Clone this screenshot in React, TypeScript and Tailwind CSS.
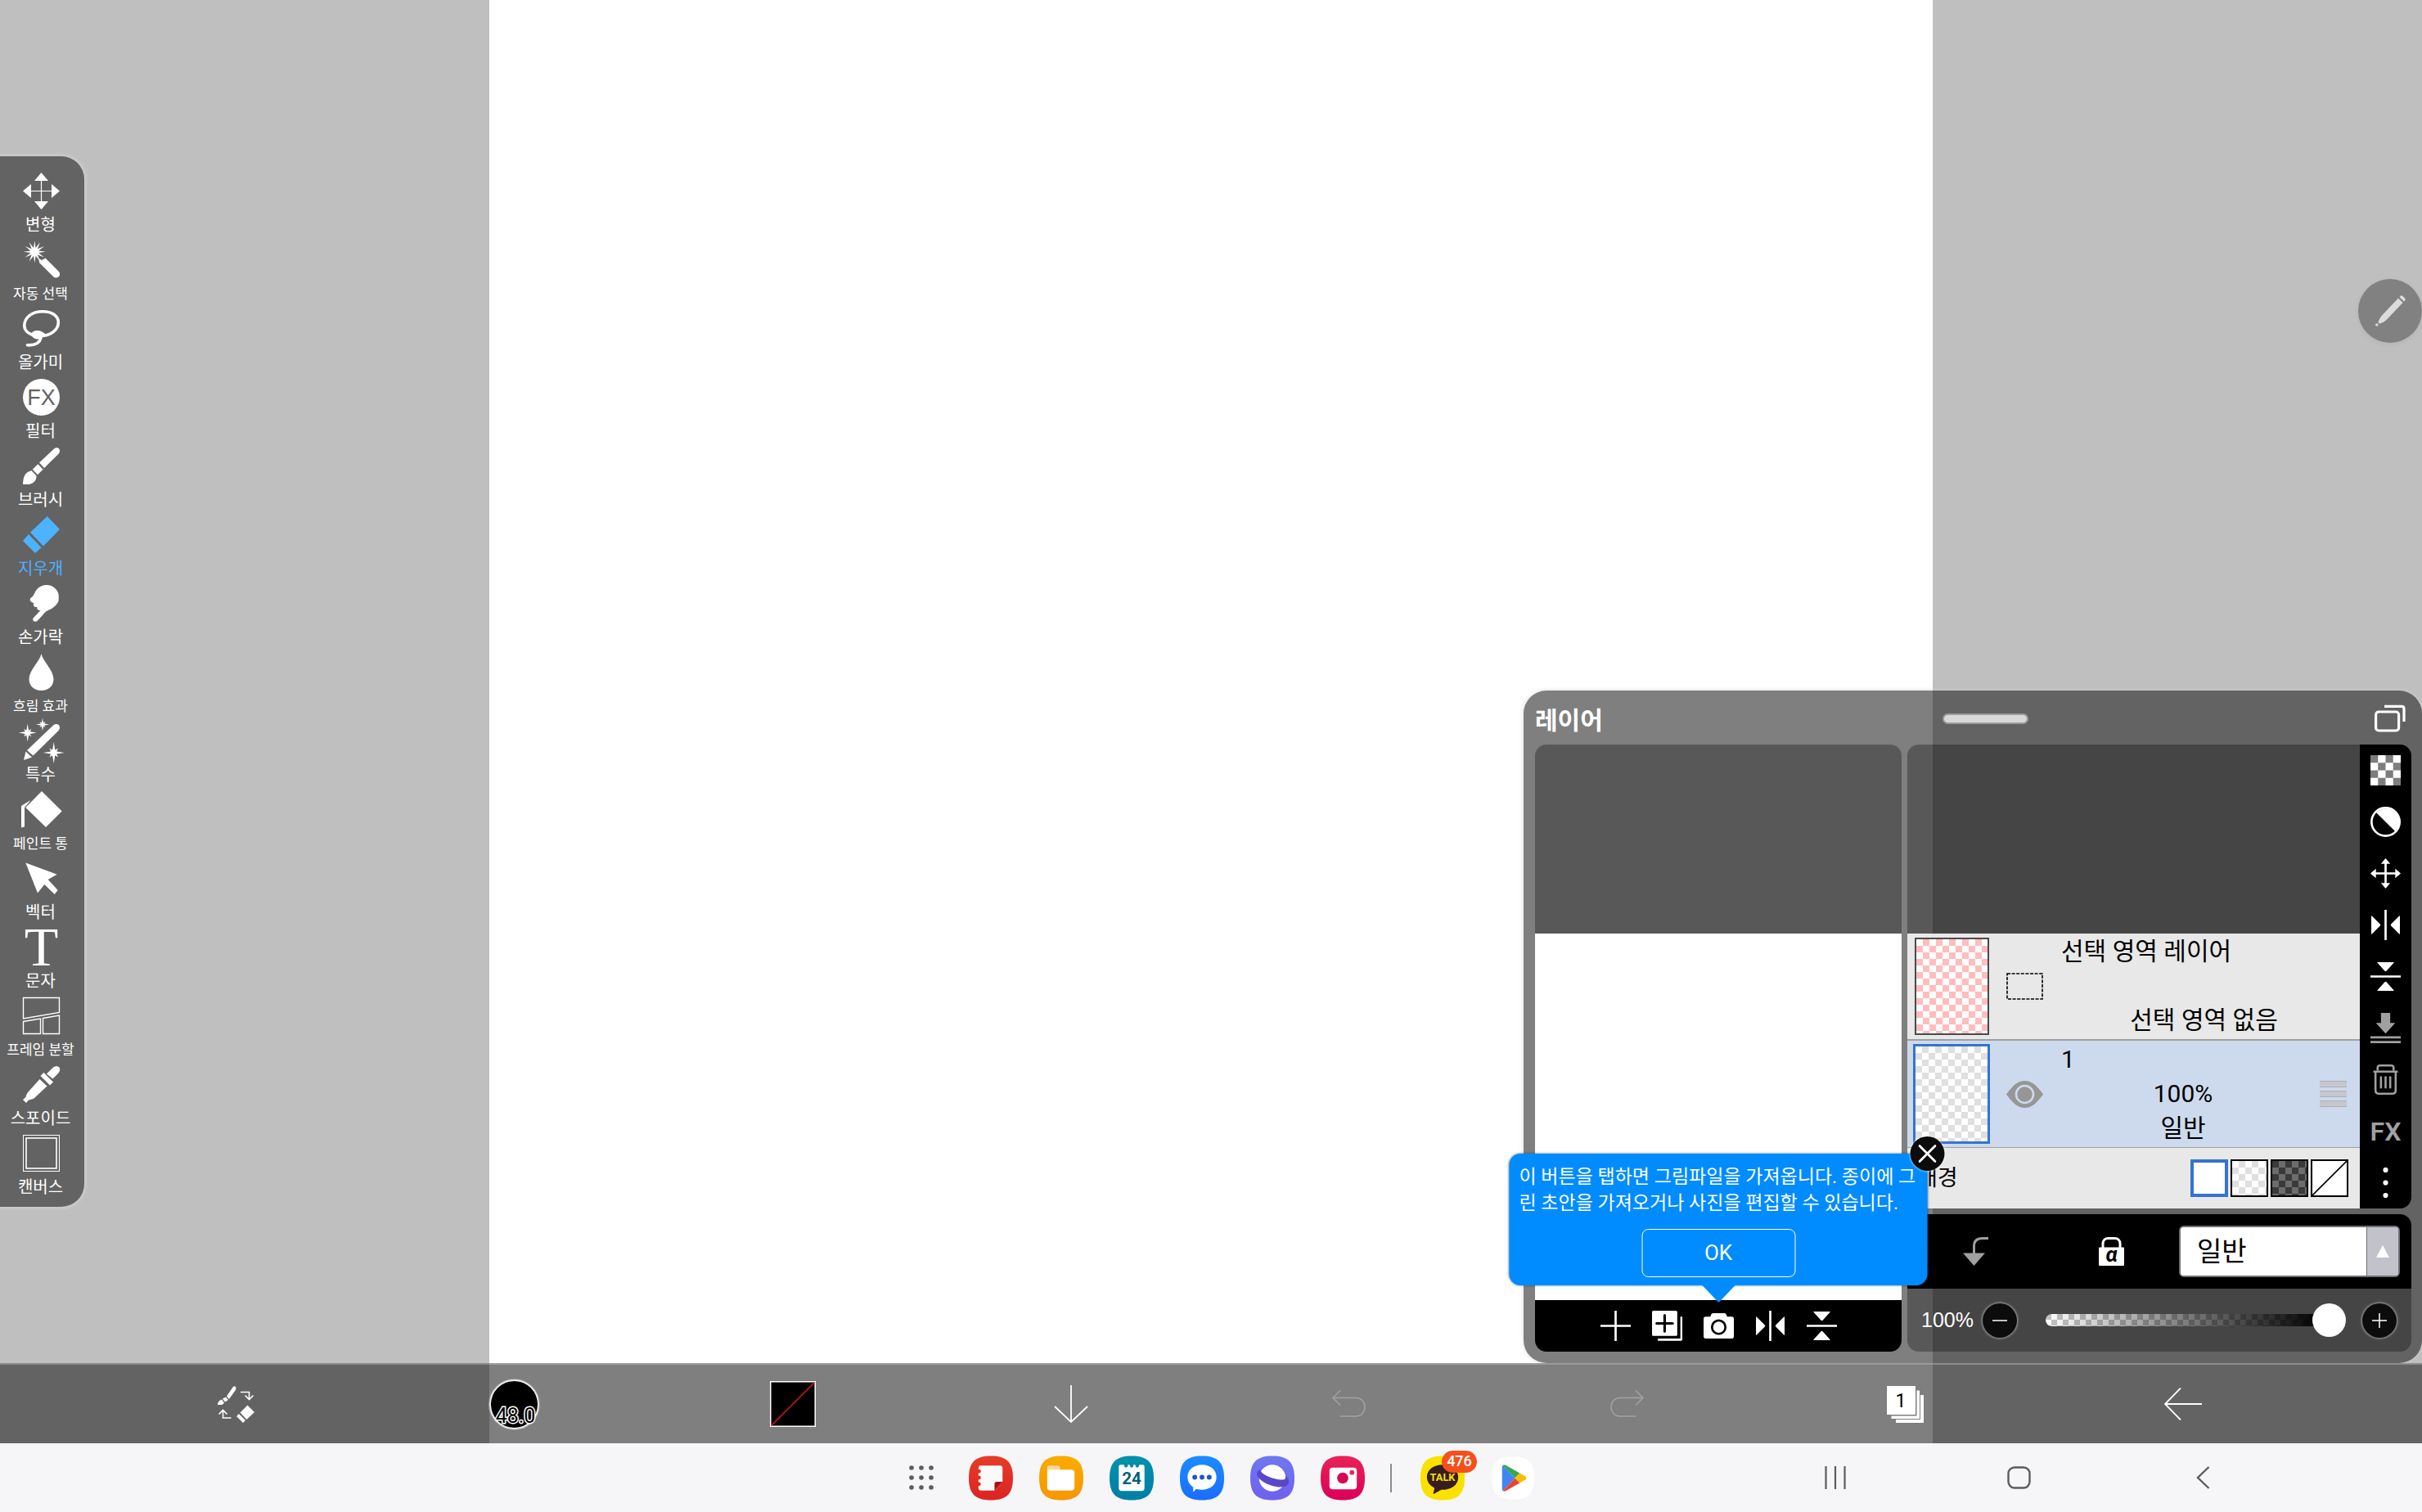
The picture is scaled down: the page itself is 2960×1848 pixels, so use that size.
import type { ReactNode } from "react";

const CHECK = "bg-size-[16px_16px]";

function starPoints(cx: number, cy: number, outer: number, inner: number, spikes: number) {
  const pts: string[] = [];
  for (let i = 0; i < spikes * 2; i++) {
    const r = i % 2 === 0 ? outer : inner;
    const a = (Math.PI * i) / spikes - Math.PI / 2;
    pts.push(`${(cx + r * Math.cos(a)).toFixed(2)},${(cy + r * Math.sin(a)).toFixed(2)}`);
  }
  return pts.join(" ");
}

function sparkle(cx: number, cy: number, r: number) {
  return (
    <>
      <polygon points={starPoints(cx, cy, r, r * 0.2, 4)} />
      <polygon points={starPoints(cx, cy, r * 0.6, r * 0.28, 8)} />
    </>
  );
}

interface Tool {
  label: string;
  small?: boolean;
  active?: boolean;
  icon: ReactNode;
}

const tools: Tool[] = [
  {
    label: "변형",
    icon: (
      <>
        <path d="M22.5 0L31 10H14ZM22.5 45L14 35H31ZM0 22.5L10 14V31ZM45 22.5L35 31V14Z" />
        <path d="M22.5 8V37M8 22.5H37" stroke="currentColor" strokeWidth="1.2" />
      </>
    ),
  },
  {
    label: "자동 선택",
    small: true,
    icon: (
      <>
        <polygon points={starPoints(14.3, 12.8, 13.5, 5, 12)} />
        <path d="M19.5 21L23 23L27.5 20.5L43.5 36.5A4.5 4.5 0 0 1 37.5 43.5L20 26Z" />
      </>
    ),
  },
  {
    label: "올가미",
    icon: (
      <>
        <path
          d="M15 31C7 29.500 1.800 25 1.800 19C1.800 9 11 1.800 24 1.800C36 1.800 43.300 7.500 43.300 15C43.300 24 34 31.500 22 31.500"
          fill="none"
          stroke="currentColor"
          strokeWidth="3.6"
        />
        <path d="M9 30C11 26 15 24.500 19 25C23 25.500 26 28 29 30.500C25 32 23 35.500 18 35.500C14 35.500 12 33 9 30Z" />
        <path d="M22 33C21 40 15 43.500 5.500 42.800" fill="none" stroke="currentColor" strokeWidth="3.6" strokeLinecap="round" />
      </>
    ),
  },
  {
    label: "필터",
    icon: (
      <>
        <circle cx="22.5" cy="22.5" r="22.5" />
        <text x="22.5" y="32" textAnchor="middle" fontSize="27" fill="#636363" fontFamily="Liberation Sans, sans-serif">
          FX
        </text>
      </>
    ),
  },
  {
    label: "브러시",
    icon: (
      <>
        <path d="M20 18.500L37.500 2C39.500 0 42.500 -.4 44.200 1.500C45.800 3.400 45 6 43.300 8L26 25Z" />
        <path d="M18.300 20.200L24.500 26.700L18 33.200L11.800 26.800Z" />
        <path d="M10.600 28.200L16.500 34.500C16.500 39 15 41 12.500 43C9.500 45.300 4 45.200 0 45C.3 41 .3 37 2.500 33.500C4.500 30.300 7 29 10.600 28.200Z" />
      </>
    ),
  },
  {
    label: "지우개",
    active: true,
    icon: <path d="M29.700 0L45 16L25 36.500L9 19.700ZM7 22L22.500 38.200L15 45L0 30Z" />,
  },
  {
    label: "손가락",
    icon: (
      <path d="M28.700 0C34 -.4 38 2 41 6C43 9 44.500 11 43.500 19.500C42 24 37 28 33 30C29 31.500 27 33 24 37L17.500 44C14 46 10.500 43 13 40L21.500 31C18.500 31 16.500 29.500 17.500 27C14 27.500 11.800 25 13.300 22C9 21 8 18.500 9.300 16C12 14.500 13 12.500 14.300 10C16 5 21 .5 28.700 0Z" />
    ),
  },
  {
    label: "흐림 효과",
    small: true,
    icon: <path d="M22.500 0C24 9 37.500 20 37.500 31C37.500 39.500 31 45 22.500 45S7.500 39.500 7.500 31C7.500 20 21 9 22.500 0Z" />,
  },
  {
    label: "특수",
    icon: (
      <>
        <path d="M5 34L37 3.500C39.500 1.200 42.500 1.500 44.200 3.500C45.800 5.500 45.200 8.500 43 10.500L12.500 40.500Z" />
        <path d="M3.500 35.500L11 42.500L1 46Z" />
        {sparkle(5.7, 12.6, 11)}
        {sparkle(24, 2.5, 8)}
        {sparkle(37.7, 37, 13)}
      </>
    ),
  },
  {
    label: "페인트 통",
    small: true,
    icon: (
      <>
        <path d="M23 0L47.700 24.500L28 44L3.300 20Z" />
        <path d="M-2 18L9.500 11L2 20V43.500L-2 44.500Z" />
      </>
    ),
  },
  { label: "벡터", icon: <path d="M3.300 3.400L41.700 17.700L30.700 24L42.700 37L38.700 42L26.300 30L18 40.500Z" /> },
  {
    label: "문자",
    icon: (
      <text x="22.5" y="45" textAnchor="middle" fontSize="68" fontFamily="Liberation Serif, serif">
        T
      </text>
    ),
  },
  {
    label: "프레임 분할",
    small: true,
    icon: (
      <path
        d="M.5 .5H44.500V18.500L.5 26ZM.5 29.500L21.500 26V44.500H.5ZM24.500 25.500L44.500 22V44.500H24.500Z"
        fill="none"
        stroke="currentColor"
        strokeWidth="1.4"
      />
    ),
  },
  {
    label: "스포이드",
    icon: (
      <>
        <path d="M29 9.500L36.500 2C39 -.4 42.500 -.4 44.500 1.500C46 4 45 7 43 9L36.500 15.500Z" />
        <path d="M25.500 8L37 19.500L33 23.500L21.500 12Z" />
        <path d="M20.500 16L29.500 24.500L13.500 39.500C11.500 40.500 8.500 41 6.500 42L4 45L0 41L3.500 38C4 35 5 33 7 31Z" />
      </>
    ),
  },
  {
    label: "캔버스",
    icon: (
      <>
        <rect x=".5" y=".5" width="44" height="44" fill="none" stroke="currentColor" />
        <rect x="4" y="4" width="37" height="37" fill="none" stroke="currentColor" strokeWidth="1.6" />
      </>
    ),
  },
];

function Toolbar() {
  return (
    <aside className="self-center rounded-r-[28px] bg-[#636363] pt-5 pb-1 w-[103px] shadow-[0_0_4px_2px_rgba(255,255,255,0.25)]">
      {tools.map((t) => (
        <button
          key={t.label}
          type="button"
          className={`flex w-[101px] flex-col items-center gap-[7px] pb-2 ${t.active ? "text-[#4db2ff]" : "text-white"}`}
        >
          <svg width="45" height="45" viewBox="0 0 45 45" fill="currentColor" className="overflow-visible">
            {t.icon}
          </svg>
          <span className={`pr-0.5 whitespace-nowrap leading-6 ${t.small ? "text-[17px]" : "text-[20px]"}`}>{t.label}</span>
        </button>
      ))}
    </aside>
  );
}

function Icon36({ children }: { children: ReactNode }) {
  return (
    <svg width="37" height="37" viewBox="0 0 36 36" fill="currentColor">
      {children}
    </svg>
  );
}

const flipH = (
  <Icon36>
    <path d="M18 0V36" stroke="currentColor" strokeWidth="2.6" />
    <path d="M1 7.500Q1 6.500 2 7.500L11.500 17Q12.300 18 11.500 19L2 28.500Q1 29.500 1 28.500ZM35 7.500Q35 6.500 34 7.500L24.500 17Q23.700 18 24.500 19L34 28.500Q35 29.500 35 28.500Z" />
  </Icon36>
);

const flipV = (
  <Icon36>
    <path d="M0 18H36" stroke="currentColor" strokeWidth="2.6" />
    <path d="M8.500 1Q7.500 1 8.500 2L17 11.500Q18 12.300 19 11.500L27.500 2Q28.500 1 27.500 1ZM8.500 35Q7.500 35 8.500 34L17 24.500Q18 23.700 19 24.500L27.500 34Q28.500 35 27.500 35Z" />
  </Icon36>
);

const previewActions = [
  {
    name: "레이어 추가",
    icon: (
      <Icon36>
        <path d="M18 0V36M0 18H36" stroke="currentColor" strokeWidth="2.6" />
      </Icon36>
    ),
  },
  {
    name: "레이어 복제",
    icon: (
      <Icon36>
        <path d="M1.500 0H28.500Q30 0 30 1.500V28.500Q30 30 28.500 30H1.500Q0 30 0 28.500V1.500Q0 0 1.500 0Z" />
        <path d="M15 5.500V24.500M5.500 15H24.500" stroke="#000" strokeWidth="3" strokeLinecap="round" />
        <path d="M35 7V33.500Q35 34.500 34 34.500H7" fill="none" stroke="currentColor" strokeWidth="2.600" />
      </Icon36>
    ),
  },
  {
    name: "사진 가져오기",
    icon: (
      <Icon36>
        <path d="M11 3H25Q26.500 3 27 4.500L28 7H33.500Q36 7 36 9.500V30.500Q36 33 33.500 33H2.500Q0 33 0 30.500V9.500Q0 7 2.500 7H8L9 4.500Q9.500 3 11 3Z" />
        <circle cx="18" cy="19.500" r="8" fill="none" stroke="#000" strokeWidth="2.6" />
      </Icon36>
    ),
  },
  { name: "좌우 반전", icon: flipH },
  { name: "상하 반전", icon: flipV },
];

const layerActions = [
  {
    name: "투명",
    icon: (
      <Icon36>
        <rect width="36" height="36" fill="#fff" />
        <path d="M0 0h9v9h-9zM18 0h9v9h-9zM9 9h9v9h-9zM27 9h9v9h-9zM0 18h9v9h-9zM18 18h9v9h-9zM9 27h9v9h-9zM27 27h9v9h-9z" fill="#7d7d7d" />
      </Icon36>
    ),
  },
  {
    name: "색 반전",
    icon: (
      <Icon36>
        <circle cx="18" cy="18" r="16.700" fill="none" stroke="currentColor" strokeWidth="2.600" />
        <path d="M7 7A15.600 15.600 0 0 1 29.500 29.500Z" />
      </Icon36>
    ),
  },
  {
    name: "이동",
    icon: (
      <Icon36>
        <path d="M18 4V32M4 18H32" stroke="currentColor" strokeWidth="2.600" />
        <path d="M18 0L23.500 6.500H12.500ZM18 36L12.500 29.500H23.500ZM0 18L6.500 12.500V23.500ZM36 18L29.500 23.500V12.500Z" />
      </Icon36>
    ),
  },
  { name: "좌우 반전", icon: flipH },
  { name: "상하 반전", icon: flipV },
  {
    name: "아래로 병합",
    dim: true,
    icon: (
      <Icon36>
        <path d="M12.500 0H23.500V12H29.500L18 24.500L6.500 12H12.500Z" />
        <path d="M0 29H36M0 34.700H36" stroke="currentColor" strokeWidth="2.600" />
      </Icon36>
    ),
  },
  {
    name: "삭제",
    dim: true,
    icon: (
      <Icon36>
        <path
          d="M3.500 8.500H32.500M8.500 7V4Q8.500 1.300 11.500 1.300H24.500Q27.500 1.300 27.500 4V7M6 9.500V31Q6 34.700 9.500 34.700H26.500Q30 34.700 30 31V9.500M12.500 14V28.500M18 14V28.500M23.500 14V28.500"
          fill="none"
          stroke="currentColor"
          strokeWidth="2.500"
        />
      </Icon36>
    ),
  },
  {
    name: "필터",
    dim: true,
    icon: <span className="font-[family-name:Roboto,sans-serif] text-[32px] leading-none font-semibold">FX</span>,
  },
  {
    name: "더보기",
    icon: (
      <Icon36>
        <circle cx="18" cy="2.800" r="3" />
        <circle cx="18" cy="18" r="3" />
        <circle cx="18" cy="33.200" r="3" />
      </Icon36>
    ),
  },
];

function ImportTip() {
  return (
    <div className="absolute bottom-full left-1/2 z-10 mb-[18px] w-[511px] -translate-x-1/2 rounded-[14px] bg-[#008cff] px-3 pt-[13px] pb-2.5 text-center shadow-[0_0_3px_rgba(0,60,120,0.7)]">
      <p className="text-left text-[23px] leading-8 text-white break-all">
        이 버튼을 탭하면 그림파일을 가져옵니다. 종이에 그<br />린 초안을 가져오거나 사진을 편집할 수 있습니다.
      </p>
      <button type="button" className="mt-[15px] h-[59px] w-[188px] rounded-lg border border-white text-[26px] text-white">
        OK
      </button>
      <svg width="42" height="22" viewBox="0 0 42 22" className="absolute top-full left-1/2 -mt-px -translate-x-1/2">
        <path d="M0 0H42L22 21Q21 22 20 21Z" fill="#008cff" />
      </svg>
      <button
        type="button"
        aria-label="닫기"
        className="absolute -top-[21px] -right-[21px] flex size-[42px] items-center justify-center rounded-full bg-[#0c0c0c] shadow-[0_0_3px_#fff]"
      >
        <svg width="22" height="22" viewBox="0 0 22 22" stroke="#fff" strokeWidth="2.8" strokeLinecap="round">
          <path d="M1.500 1.500L20.500 20.500M20.500 1.500L1.500 20.500" />
        </svg>
      </button>
    </div>
  );
}

function Preview() {
  return (
    <section className="flex w-[448px] flex-col">
      <div className="h-[231px] rounded-t-[14px] bg-black/30" />
      <div className="flex-1 bg-white" />
      <div className="relative flex h-[63px] justify-center rounded-b-[14px] bg-black text-white">
        {previewActions.map((a) => (
          <button key={a.name} type="button" aria-label={a.name} className="flex w-[63px] items-center justify-center">
            {a.icon}
          </button>
        ))}
        <ImportTip />
      </div>
    </section>
  );
}

function LayerList() {
  return (
    <div className="flex">
      <div className="flex-1 text-[30px] text-black">
        <div className="h-[231px] rounded-tl-[14px] bg-black/30" />
        <div className="flex h-[131px] items-center border-b-2 border-[#a0a0a0] bg-[#e8e8e8] pr-4 pl-[9px]">
          <div className={`h-[119px] w-[91px] border-2 border-[#4a4a4a] bg-[repeating-conic-gradient(#ffbdbd_0_25%,#fff_0_50%)] ${CHECK}`} />
          <svg width="45" height="33" viewBox="0 0 45 33" className="ml-[21px]">
            <rect x="1" y="1" width="43" height="31" fill="none" stroke="#000" strokeWidth="1.6" strokeDasharray="4 1.6" />
          </svg>
          <div className="ml-[22px] flex h-full flex-1 flex-col justify-between pt-0.5 pb-[3px] leading-10">
            <span>선택 영역 레이어</span>
            <span className="text-center">선택 영역 없음</span>
          </div>
        </div>
        <div className="flex h-[131px] items-center border-b border-[#a0a0a0] bg-[#cddaed] pr-4 pl-[7px]">
          <div className={`h-[122px] w-[94px] border-[3px] border-[#3573d0] bg-[repeating-conic-gradient(#dfdfdf_0_25%,#fff_0_50%)] ${CHECK}`} />
          <button type="button" aria-label="표시" className="ml-5">
            <svg width="45" height="33" viewBox="0 0 45 33" fill="#969696">
              <path d="M0 16.500C9 4 15 0 22.500 0S36 4 45 16.500C36 29 30 33 22.500 33S9 29 0 16.500Z" />
              <circle cx="22.500" cy="16.500" r="10.500" fill="none" stroke="#cddaed" strokeWidth="2.600" />
            </svg>
          </button>
          <div className="ml-[22px] flex h-full flex-1 flex-col pt-0.5 leading-[42px]">
            <span>1</span>
            <span className="text-center">100%</span>
            <span className="text-center">일반</span>
          </div>
          <div className="ml-[18px] flex flex-col gap-1">
            <i className="h-2 w-[33px] border-y border-[#a9b0bb] bg-[#c6c7cc]" />
            <i className="h-2 w-[33px] border-y border-[#a9b0bb] bg-[#c6c7cc]" />
            <i className="h-2 w-[33px] border-y border-[#a9b0bb] bg-[#c6c7cc]" />
          </div>
        </div>
        <div className="flex h-[74px] items-center gap-[3px] bg-[#e8e8e8] pr-3.5 pl-3">
          <span className="flex-1 text-[27px]">배경</span>
          <button type="button" aria-label="흰색" className="size-[46px] border-4 border-[#3573d0] bg-white" />
          <button
            type="button"
            aria-label="밝은 투명"
            className={`size-[46px] border-2 border-black bg-[repeating-conic-gradient(#dfdfdf_0_25%,#fff_0_50%)] ${CHECK}`}
          />
          <button
            type="button"
            aria-label="어두운 투명"
            className={`size-[46px] border-2 border-black bg-[repeating-conic-gradient(#6c6c6c_0_25%,#3a3a3a_0_50%)] ${CHECK}`}
          />
          <button type="button" aria-label="없음" className="size-[46px] border-2 border-black bg-white">
            <svg width="42" height="42" viewBox="0 0 42 42">
              <path d="M0 42L42 0" stroke="#000" strokeWidth="1.6" />
            </svg>
          </button>
        </div>
      </div>
      <div className="flex w-[63px] flex-col rounded-r-[14px] bg-black">
        {layerActions.map((a) => (
          <button
            key={a.name}
            type="button"
            aria-label={a.name}
            className={`flex h-[63px] items-center justify-center ${a.dim ? "text-[#a0a0a0]" : "text-white"}`}
          >
            {a.icon}
          </button>
        ))}
      </div>
    </div>
  );
}

function LayerControls() {
  return (
    <div>
      <div className="flex h-[91px] items-center rounded-t-[14px] bg-black pr-3.5">
        <button type="button" aria-label="클리핑" className="flex w-[166px] justify-center">
          <svg width="31" height="35" viewBox="0 0 31 35">
            <path d="M31 1.500H24C17 1.500 13.500 5 13.500 11V21" fill="none" stroke="#a0a0a0" strokeWidth="3" />
            <path d="M0 19.500H27L13.500 35Z" fill="#a0a0a0" />
          </svg>
        </button>
        <button type="button" aria-label="알파 잠금" className="flex w-[166px] justify-center">
          <svg width="31" height="35" viewBox="0 0 31 35">
            <path d="M5 14V8C5 4 7.500 1.500 11.500 1.500H19.500C23.500 1.500 26 4 26 8V14" fill="none" stroke="#fff" strokeWidth="3" />
            <rect y="12.500" width="31" height="22.500" rx="1" fill="#fff" />
            <text x="15.500" y="30" textAnchor="middle" fontSize="26" fontWeight="700" fontStyle="italic" fontFamily="Roboto, sans-serif">
              α
            </text>
          </svg>
        </button>
        <label className="flex h-[63px] flex-1 overflow-hidden rounded-md border-2 border-[#6e7075] bg-white">
          <select aria-label="합성 모드" className="flex-1 appearance-none bg-white pl-5 text-[33px] text-black outline-none">
            <option>일반</option>
          </select>
          <span className="flex w-[39px] items-center justify-center border-l border-[#6e7075] bg-[#c2c3ca]">
            <svg width="16" height="15" viewBox="0 0 16 15">
              <path d="M8 0L16 15H0Z" fill="#fff" />
            </svg>
          </span>
        </label>
      </div>
      <div className="flex h-[77px] items-center rounded-b-[14px] bg-black/30 pr-[18px] pl-[17px]">
        <label htmlFor="opacity" className="w-[75px] font-[family-name:'Liberation_Sans',sans-serif] text-[25px] text-white">
          100%
        </label>
        <button type="button" aria-label="감소" className="flex size-[42px] items-center justify-center rounded-full bg-[#0c0c0c] shadow-[0_0_3px_1px_#a0a0a0]">
          <svg width="18" height="18" viewBox="0 0 18 18" stroke="#fff" strokeWidth="1.5">
            <path d="M0 9H18" />
          </svg>
        </button>
        <input
          id="opacity"
          type="range"
          defaultValue={100}
          className="mr-5 ml-[35px] h-[42px] min-w-0 flex-1 appearance-none bg-transparent [&::-webkit-slider-runnable-track]:h-[15px] [&::-webkit-slider-runnable-track]:rounded-full [&::-webkit-slider-runnable-track]:bg-[linear-gradient(90deg,rgba(0,0,0,0),#000_92%),repeating-conic-gradient(#fff_0_25%,#c4c4c4_0_50%)] [&::-webkit-slider-runnable-track]:bg-size-[100%_100%,14px_14px] [&::-webkit-slider-thumb]:-mt-[13px] [&::-webkit-slider-thumb]:size-[41px] [&::-webkit-slider-thumb]:appearance-none [&::-webkit-slider-thumb]:rounded-full [&::-webkit-slider-thumb]:bg-white"
        />
        <button type="button" aria-label="증가" className="flex size-[42px] items-center justify-center rounded-full bg-[#0c0c0c] shadow-[0_0_3px_1px_#a0a0a0]">
          <svg width="18" height="18" viewBox="0 0 18 18" stroke="#fff" strokeWidth="1.5">
            <path d="M9 0V18M0 9H18" />
          </svg>
        </button>
      </div>
    </div>
  );
}

function LayerPanel() {
  return (
    <section className="w-[1098px] rounded-[28px] bg-[#1e1e1e]/57 pr-[13px] pb-3.5 pl-3.5 shadow-[0_0_4px_1px_rgba(210,210,210,0.6)]">
      <header className="flex h-[66px] items-center justify-between pt-0.5">
        <h2 className="pt-1 text-[30px] font-bold text-white">레이어</h2>
        <span className="h-[13px] w-[105px] rounded-full border-2 border-[#9c9c9c] bg-[#d9d9d9]" />
        <button type="button" aria-label="창 모드" className="flex w-[52px] justify-center">
          <svg width="38" height="34" viewBox="0 0 38 34" fill="none" stroke="#fff" strokeWidth="3.2">
            <rect x="1.600" y="9" width="28" height="23" rx="3.500" />
            <path d="M12 2.300H33Q36 2.300 36 5V21" />
          </svg>
        </button>
      </header>
      <div className="flex gap-[7px]">
        <Preview />
        <div className="flex min-w-0 flex-1 flex-col gap-[7px]">
          <LayerList />
          <LayerControls />
        </div>
      </div>
    </section>
  );
}

function BottomBar() {
  return (
    <footer className="relative flex h-[98px] border-t-2 border-white/25 bg-[#1e1e1e]/57 bg-clip-border pr-[122px] pl-[119px] text-white *:flex *:flex-1 *:items-center *:justify-center">
      <button type="button" aria-label="브러시와 지우개 전환">
        <svg width="45" height="45" viewBox="0 0 45 45" fill="#fff">
          <path d="M11 12.500L18.500 1.500Q21 -1 22.500 2Q22.500 3.500 21.500 5.500L14 16ZM10 13.500L13 17L9 19.500L6 15.500ZM5 16.500L8 20.500Q7 23.500 0 23Q0 18 5 16.500Z" />
          <path d="M36.500 23.500L45 32L35.500 41L27.500 32.500ZM26 34L34 42L31 45L23 37Z" />
          <path d="M28 7.500H38.500V15.500M33.500 11.500L38.500 16.500L43.500 11.500M16.500 39H6.500V30M1.500 34.500L6.500 29.500L11.500 34.500" fill="none" stroke="#fff" strokeWidth="1.600" />
        </svg>
      </button>
      <button type="button" aria-label="브러시 크기">
        <svg width="63" height="63" viewBox="0 0 63 63">
          <circle cx="31.500" cy="31.500" r="30" fill="#000" stroke="#999" strokeWidth="3" />
          <circle cx="31.500" cy="31.500" r="29.500" fill="none" stroke="#ededed" strokeWidth="1.800" />
          <text x="33" y="54" textAnchor="middle" fontSize="25" fill="#000" stroke="#fff" strokeWidth="3" paintOrder="stroke" fontFamily="Roboto, sans-serif">
            48.0
          </text>
        </svg>
      </button>
      <button type="button" aria-label="색">
        <svg width="56" height="56" viewBox="0 0 56 56">
          <rect x=".75" y=".75" width="54.500" height="54.500" fill="#000" stroke="#fff" strokeWidth="1.500" />
          <path d="M1.500 54.500L54.500 1.500" stroke="#e01818" strokeWidth="1.500" />
        </svg>
      </button>
      <button type="button" aria-label="내리기">
        <svg width="42" height="46" viewBox="0 0 42 46" fill="none" stroke="#fff" strokeWidth="1.800">
          <path d="M21 0V45M1 26L21 45L41 26" />
        </svg>
      </button>
      <button type="button" aria-label="실행 취소">
        <svg width="41" height="34" viewBox="0 0 41 34" fill="none" stroke="#a3a3a3" strokeWidth="1.500">
          <path d="M10 .5L1 9.500L10 18.500M1 9.500H29C36 9.500 40 14.500 40 20.500S36 32 29 32H10" />
        </svg>
      </button>
      <button type="button" aria-label="다시 실행">
        <svg width="41" height="34" viewBox="0 0 41 34" fill="none" stroke="#a3a3a3" strokeWidth="1.500">
          <path d="M31 .5L40 9.500L31 18.500M40 9.500H12C5 9.500 1 14.500 1 20.500S5 32 12 32H31" />
        </svg>
      </button>
      <button type="button" aria-label="레이어">
        <svg width="45" height="45" viewBox="0 0 45 45" fill="#fff">
          <rect x="11" y="11" width="34" height="34" />
          <rect x="5" y="5" width="36" height="36" fill="#7f7f7f" />
          <rect x="5.500" y="5.500" width="34.500" height="34.500" />
          <rect width="36.500" height="36.500" fill="#7f7f7f" />
          <rect width="35" height="35" />
          <text x="17" y="26" textAnchor="middle" fontSize="23" fill="#000" fontFamily="Roboto, sans-serif">
            1
          </text>
        </svg>
      </button>
      <button type="button" aria-label="뒤로">
        <svg width="46" height="40" viewBox="0 0 46 40" fill="none" stroke="#fff" strokeWidth="1.800">
          <path d="M20 .5L1 20L20 39.500M1 20H46" />
        </svg>
      </button>
    </footer>
  );
}

const SQUIRCLE = "M27.500 0C47 0 55 8 55 27.500S47 55 27.500 55S0 47 0 27.500S8 0 27.500 0Z";

const apps = [
  {
    name: "Notes",
    top: "#e63c28",
    bottom: "#dc2323",
    art: (
      <>
        <path d="M14.500 12H39Q42 12 42 15V32L32 43H15Q12 43 12 40V37.500Q15 37.500 15 35T12 32.500V29.500Q15 29.500 15 27T12 24.500V21.500Q15 21.500 15 19T12 16.500Q12 12 14.500 12Z" fill="#fafafa" />
        <path d="M32 43V35Q32 32 35 32H42Z" fill="#a51212" />
      </>
    ),
  },
  {
    name: "My Files",
    top: "#f9ad00",
    bottom: "#f89500",
    art: (
      <>
        <path d="M10 20V14.500Q10 12 13 12H23Q26 12 26 15V20Z" fill="#fdd694" />
        <path d="M10 17H40Q44 17 44 21V39Q44 43 40 43H14Q10 43 10 39Z" fill="#fff" />
      </>
    ),
  },
  {
    name: "Calendar",
    top: "#0092ab",
    bottom: "#007ea6",
    art: (
      <>
        <path d="M13.500 11H18Q18.500 14.500 20.500 14.500T23 11H25Q25.500 14.500 27.500 14.500T30 11H32Q32.500 14.500 34.500 14.500T37 11H41.500Q43.500 11 43.500 13.500V40Q43.500 43.500 40 43.500H15Q11.500 43.500 11.500 40V13.500Q11.500 11 13.500 11Z" fill="#fff" />
        <text x="27.500" y="35.500" textAnchor="middle" fontSize="21" fontWeight="700" fill="#04607c" fontFamily="Roboto, sans-serif">
          24
        </text>
      </>
    ),
  },
  {
    name: "Messages",
    top: "#1b8cff",
    bottom: "#1a6dff",
    art: (
      <>
        <path d="M27.500 11C38 11 45.500 17.500 45.500 26.500S38 42 27.500 42Q23 42 20 41Q19 44 16 44.500Q17 42 16.500 39Q9.500 34 9.500 26.500C9.500 17.500 17 11 27.500 11Z" fill="#fff" />
        <circle cx="18.500" cy="26.500" r="3" fill="#1858d0" />
        <circle cx="27.500" cy="26.500" r="3" fill="#1858d0" />
        <circle cx="36.500" cy="26.500" r="3" fill="#1858d0" />
      </>
    ),
  },
  {
    name: "Internet",
    top: "#6e78f0",
    bottom: "#7060f0",
    art: (
      <>
        <circle cx="27.500" cy="27.500" r="16.500" fill="#fff" />
        <path d="M12 17C6 20 6.500 26 16 32C26 38.500 41 41 46.500 36C49 33 48.500 29 44 24.500C44.500 27.500 44 29 41 29.500C33 30.500 14 24 12 17Z" fill="#5848c8" />
      </>
    ),
  },
  {
    name: "Camera",
    top: "#e82358",
    bottom: "#dc0058",
    art: (
      <>
        <rect x="11" y="14.500" width="34" height="27" rx="4" fill="#fff" />
        <circle cx="27.500" cy="27.500" r="7" fill="#d60a55" />
        <circle cx="39" cy="20.500" r="3" fill="#e0285e" />
      </>
    ),
  },
];

function NavBar() {
  return (
    <nav className="flex h-[84px] items-center bg-[#f6f6f8]">
      <div className="flex flex-1 items-center justify-end gap-8">
        <button type="button" aria-label="앱 목록" className="mr-[11px]">
          <svg width="30" height="30" viewBox="0 0 30 30" fill="#5c5c5e">
            {[3, 15, 27].map((y) => [3, 15, 27].map((x) => <circle key={`${x}-${y}`} cx={x} cy={y} r="2.8" />))}
          </svg>
        </button>
        {apps.map((a) => (
          <button key={a.name} type="button" aria-label={a.name}>
            <svg width="54" height="55" viewBox="0 0 55 55">
              <defs>
                <linearGradient id={a.name.replace(" ", "")} x1="0" y1="0" x2="0" y2="1">
                  <stop offset="0" stopColor={a.top} />
                  <stop offset="1" stopColor={a.bottom} />
                </linearGradient>
              </defs>
              <path d={SQUIRCLE} fill={`url(#${a.name.replace(" ", "")})`} />
              {a.art}
            </svg>
          </button>
        ))}
        <i className="-ml-px h-[35px] w-0.5 bg-[#8c8c8e]" />
        <button type="button" aria-label="KakaoTalk" className="relative ml-[3px]">
          <svg width="54" height="55" viewBox="0 0 55 55">
            <path d={SQUIRCLE} fill="#fae100" />
            <path d="M27.500 11C39 11 47 17.500 47 26.500S39 42 27.500 42H26L17 47Q15.500 47.500 16 46L17.500 40Q8 35 8 26.500C8 17.500 16 11 27.500 11Z" fill="#371d1e" />
            <text x="27.500" y="31.500" textAnchor="middle" fontSize="13" fontWeight="700" fill="#fae100" fontFamily="Roboto, sans-serif">
              TALK
            </text>
          </svg>
          <span className="absolute -top-1.5 -right-[15px] flex h-[27px] w-[43px] items-center justify-center rounded-full bg-[#f5501c] text-[18px] leading-none font-medium text-white">
            476
          </span>
        </button>
        <button type="button" aria-label="Play Store">
          <svg width="54" height="55" viewBox="0 0 55 55">
            <path d={SQUIRCLE} fill="#fff" stroke="#ececee" strokeWidth=".6" />
            <path d="M15 11.500L30 27.500L15 43.500Q14 42.500 14 41V14Q14 12.500 15 11.500Z" fill="#4285f4" />
            <path d="M15 11.500Q16.500 10.500 18.500 11.500L36 21.500L30 27.500Z" fill="#34a853" />
            <path d="M15 43.500Q16.500 44.500 18.500 43.500L36 33.500L30 27.500Z" fill="#ea4335" />
            <path d="M36 21.500L43 25.500Q45.500 27.500 43 29.500L36 33.500L30 27.500Z" fill="#fbbc04" />
          </svg>
        </button>
      </div>
      <div className="flex w-[1084px] justify-end pr-[155px] text-[#5c5c5e] *:flex *:w-[225px] *:justify-center">
        <button type="button" aria-label="최근 앱">
          <svg width="26" height="28" viewBox="0 0 26 28" stroke="currentColor" strokeWidth="2.200">
            <path d="M1.500 0V28M13 0V28M24.500 0V28" />
          </svg>
        </button>
        <button type="button" aria-label="홈">
          <svg width="29" height="28" viewBox="0 0 29 28" fill="none" stroke="currentColor" strokeWidth="2.400">
            <rect x="1.500" y="1.500" width="26" height="25" rx="7.500" />
          </svg>
        </button>
        <button type="button" aria-label="이전">
          <svg width="17" height="28" viewBox="0 0 17 28" fill="none" stroke="currentColor" strokeWidth="2.400">
            <path d="M15.500 1L2 14L15.500 27" />
          </svg>
        </button>
      </div>
    </nav>
  );
}

export default function App() {
  return (
    <div className="flex h-screen flex-col overflow-hidden bg-[#bfbfbf] font-[family-name:Roboto,'Noto_Sans_CJK_KR',sans-serif]">
      <div className="relative flex min-h-0 flex-1 flex-col">
        <div className="absolute inset-0 flex justify-center">
          <div className="aspect-square h-full bg-white" />
        </div>
        <main className="relative flex min-h-0 flex-1 justify-between">
          <Toolbar />
          <div className="flex flex-col items-end justify-between pt-[341px]">
            <button type="button" aria-label="펜 모드" className="flex size-[78px] items-center justify-center rounded-full bg-[#818181] shadow-[0_2px_6px_rgba(0,0,0,0.06)]">
              <svg width="37" height="38" viewBox="0 0 37 38" fill="#dcdcdc">
                <path d="M28 3.500L33.500 9L13 30.500Q9 34 5.500 34.500Q3.500 34.500 3.500 32.500Q5 28 8 24.500Z" />
                <path d="M30 1.500Q31.500 -.5 33.500 1L36 3.500Q37.500 5.500 35.500 7L35 7.500L29.500 2Z" />
                <circle cx="1.800" cy="36" r="1.800" />
              </svg>
            </button>
            <LayerPanel />
          </div>
        </main>
        <BottomBar />
      </div>
      <NavBar />
    </div>
  );
}
